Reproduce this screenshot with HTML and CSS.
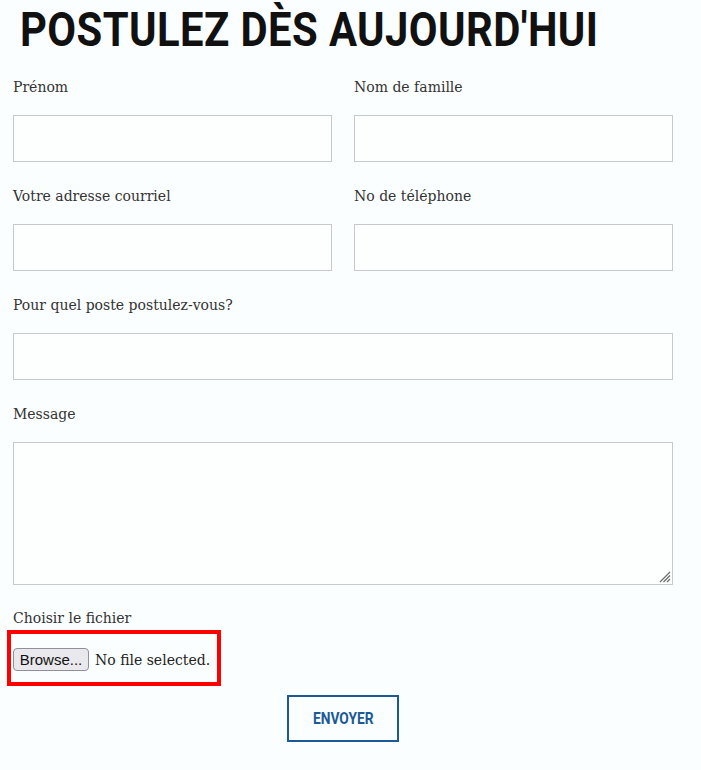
FILE: index.html
```html
<!DOCTYPE html>
<html lang="fr">
<head>
<meta charset="utf-8">
<link rel="stylesheet" href="styles.css">
</head>
<body>
<div class="page">
  <h1 class="title">POSTULEZ DÈS AUJOURD'HUI</h1>
  <form class="form">
    <div class="grid">
      <label class="field">
        <span class="label">Prénom</span>
        <input class="input" type="text">
      </label>
      <label class="field">
        <span class="label">Nom de famille</span>
        <input class="input" type="text">
      </label>
      <label class="field">
        <span class="label">Votre adresse courriel</span>
        <input class="input" type="text">
      </label>
      <label class="field">
        <span class="label">No de téléphone</span>
        <input class="input" type="text">
      </label>
      <label class="field wide">
        <span class="label">Pour quel poste postulez-vous?</span>
        <input class="input" type="text">
      </label>
      <label class="field wide">
        <span class="label">Message</span>
        <span class="area-wrap">
          <textarea class="area"></textarea>
          <svg class="grip" width="12" height="12" viewBox="0 0 12 12">
            <path d="M11 1 L1 11 M11 4.5 L4.5 11 M11 8 L8 11" stroke="#6f6f6f" stroke-width="1.3" fill="none"/>
          </svg>
        </span>
      </label>
    </div>
    <div class="file-field">
      <span class="label">Choisir le fichier</span>
      <div class="file-box">
        <button type="button" class="browse">Browse...</button>
        <span class="file-status">No file selected.</span>
      </div>
    </div>
    <div class="actions">
      <button type="button" class="submit"><span class="submit-text">ENVOYER</span></button>
    </div>
  </form>
</div>
</body>
</html>
```
FILE: styles.css
```css
html, body {
  margin: 0;
  padding: 0;
  background: #fbfefe;
}
.page {
  padding: 0 28px 0 13px;
  font-family: "DejaVu Serif", "Liberation Serif", serif;
  color: #333;
}
.title {
  margin: 0;
  padding: 2px 0 0 8px;
  font-family: Roboto, "Liberation Sans", sans-serif;
  font-weight: 700;
  font-size: 48px;
  line-height: 56px;
  color: #111;
  letter-spacing: 0.5px;
  transform: scaleX(0.87);
  transform-origin: left center;
  white-space: nowrap;
}
.form {
  margin-top: 17px;
}
.grid {
  display: grid;
  grid-template-columns: 1fr 1fr;
  column-gap: 22px;
  row-gap: 22px;
}
.field {
  display: flex;
  flex-direction: column;
  gap: 16px;
}
.wide {
  grid-column: 1 / -1;
}
.label {
  font-size: 14px;
  line-height: 24px;
  color: #333;
}
.input {
  box-sizing: border-box;
  height: 47px;
  border: 1px solid #c6cacd;
  background: #fdffff;
  margin: 0;
  outline: none;
}
.area-wrap {
  position: relative;
  display: block;
  height: 143px;
}
.area {
  box-sizing: border-box;
  display: block;
  width: 100%;
  height: 143px;
  border: 1px solid #c6cacd;
  background: #fdffff;
  margin: 0;
  resize: none;
  outline: none;
}
.grip {
  position: absolute;
  right: 2px;
  bottom: 2px;
}
.file-field {
  margin-top: 21px;
  display: flex;
  flex-direction: column;
}
.file-box {
  box-sizing: border-box;
  margin-left: -6px;
  width: 214px;
  height: 56px;
  border: 4px solid #ff0000;
  display: flex;
  align-items: center;
  padding: 3px 0 0 2px;
  gap: 6px;
}
.browse {
  box-sizing: border-box;
  height: 23px;
  width: 76px;
  padding: 0;
  font-family: "Liberation Sans", Arial, sans-serif;
  font-size: 15px;
  color: #111;
  background: #e9e9ed;
  border: 1px solid #8f8f9d;
  border-radius: 4px;
}
.file-status {
  font-size: 14px;
  color: #222;
}
.actions {
  display: flex;
  justify-content: center;
  margin-top: 9px;
}
.submit {
  box-sizing: border-box;
  width: 112px;
  height: 47px;
  background: transparent;
  border: 2px solid #1b5a96;
  color: #1b5a96;
  font-family: Roboto, "Liberation Sans", sans-serif;
  font-weight: 700;
  font-size: 16px;
  padding: 0;
  display: flex;
  align-items: center;
  justify-content: center;
}
.submit-text {
  display: inline-block;
  transform: scaleX(0.86);
}
```
